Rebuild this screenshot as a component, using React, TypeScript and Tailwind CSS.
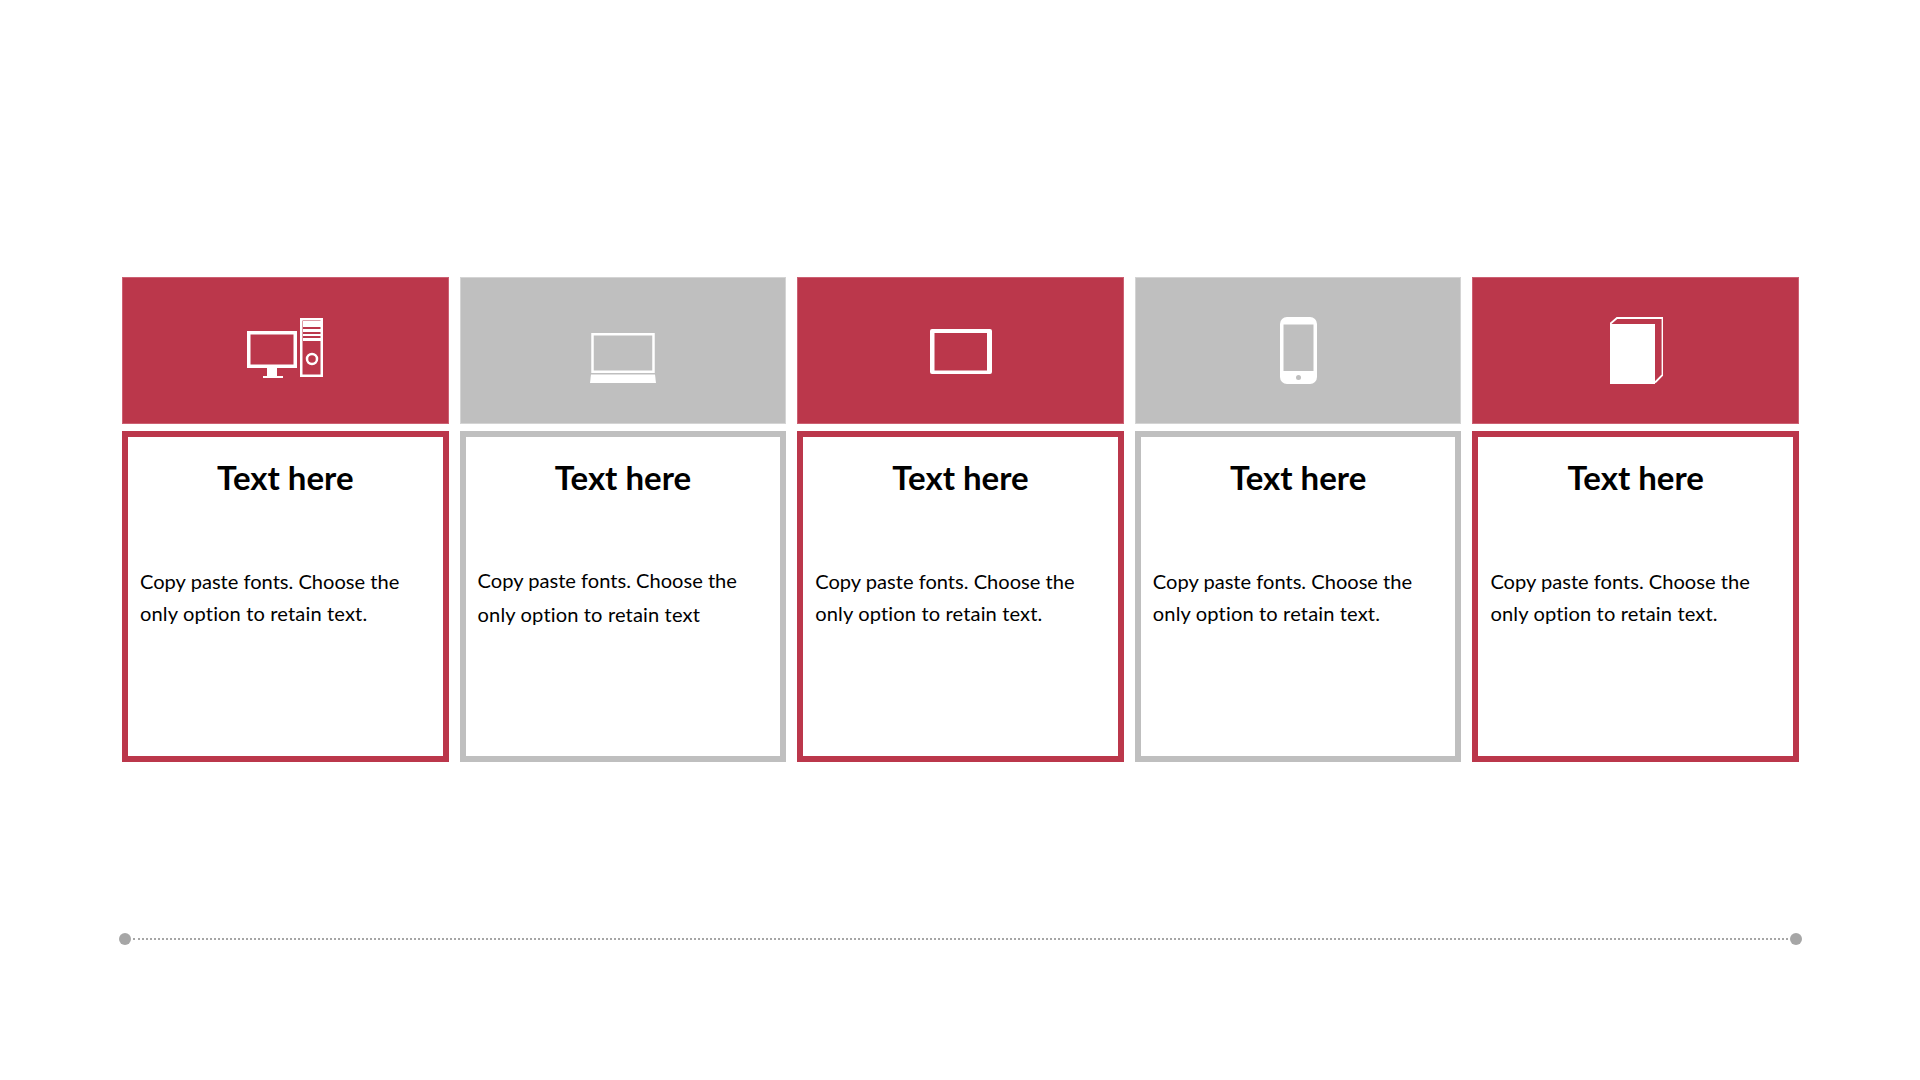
function DesktopIcon() {
  return (
    <svg width="76" height="60" viewBox="0 0 76 60" className="-mt-[5px] block" fill="none">
      <rect x="1.75" y="14.75" width="46.500" height="33.500" stroke="white" strokeWidth="3.500" />
      <path d="M20 50h10v8H20z" fill="white" />
      <path d="M16 58h20v2H16z" fill="white" />
      <rect x="54.250" y="1.250" width="20.500" height="56.500" stroke="white" strokeWidth="2.500" />
      <path d="M56 3h18v6H56zM56 11h18v3H56zM56 16h18v2H56zM56 20h18v3H56z" fill="white" />
      <circle cx="65" cy="41" r="5" stroke="white" strokeWidth="2.500" />
    </svg>
  );
}

function LaptopIcon() {
  return (
    <svg width="66" height="50" viewBox="0 0 66 50" className="mt-[14px] block" fill="none">
      <rect x="2.500" y="1.250" width="61" height="37.500" stroke="white" strokeWidth="2.500" />
      <path d="M1 41.500h64l1 8.500H0z" fill="white" />
    </svg>
  );
}

function TabletIcon() {
  return (
    <svg width="62" height="45" viewBox="0 0 62 45" className="mt-[2px] ml-[2px] block">
      <path
        fillRule="evenodd"
        d="M2 0h58a2 2 0 0 1 2 2v41a2 2 0 0 1-2 2H2a2 2 0 0 1-2-2V2a2 2 0 0 1 2-2zM4.500 4v37.500h52.500V4z"
        fill="white"
      />
    </svg>
  );
}

function PhoneIcon() {
  return (
    <svg width="37" height="67" viewBox="0 0 37 67" className="block">
      <path
        fillRule="evenodd"
        d="M7 0h23a7 7 0 0 1 7 7v53a7 7 0 0 1-7 7H7a7 7 0 0 1-7-7V7a7 7 0 0 1 7-7zM3.500 7.500v46.500h30V7.500z"
        fill="white"
      />
      <circle cx="18.500" cy="60.500" r="2.500" fill="#bfbfbf" />
    </svg>
  );
}

function BookIcon() {
  return (
    <svg width="53" height="67" viewBox="0 0 53 67" className="ml-[1px] block" fill="none">
      <path d="M0 7h45v60H0z" fill="white" />
      <path d="M0 7l7-6h45.500V58L45 65.500" stroke="white" strokeWidth="1.800" />
    </svg>
  );
}

const cards = [
  { icon: <DesktopIcon />, red: true, text: "only option to retain text.", para: "mt-[68px] leading-[32px]" },
  { icon: <LaptopIcon />, red: false, text: "only option to retain text", para: "mt-[66px] leading-[34px]" },
  { icon: <TabletIcon />, red: true, text: "only option to retain text.", para: "mt-[68px] leading-[32px]" },
  { icon: <PhoneIcon />, red: false, text: "only option to retain text.", para: "mt-[68px] leading-[32px]" },
  { icon: <BookIcon />, red: true, text: "only option to retain text.", para: "mt-[68px] leading-[32px]" },
];

export default function App() {
  return (
    <div className="min-h-[1080px] bg-white font-['Lato',sans-serif] text-black overflow-hidden">
      <div className="pt-[277px] pl-[122px] pr-[121px]">
        <div className="grid grid-cols-5 gap-[11px]">
          {cards.map((card, i) => (
            <div key={i}>
              <div
                className={`h-[147px] flex items-center justify-center border ${
                  card.red ? "bg-[#bb374b] border-[#cc6072]" : "bg-[#bfbfbf] border-[#d4d4d4]"
                }`}
              >
                {card.icon}
              </div>
              <div
                className={`mt-[7px] h-[331px] border-[6px] px-[12px] ${
                  card.red ? "border-[#bb374b]" : "border-[#bfbfbf]"
                }`}
              >
                <h2 className="pt-[20px] text-center text-[33px] leading-[40px] font-bold">Text here</h2>
                <p className={`text-[20.100px] ${card.para}`}>
                  Copy paste fonts. Choose the
                  <br />
                  <span className="tracking-[0.13px]">{card.text}</span>
                </p>
              </div>
            </div>
          ))}
        </div>
      </div>
      <div className="mt-[171px] ml-[119px] w-[1683px] flex items-center gap-[2px]">
        <div className="w-[12px] h-[12px] rounded-full bg-[#a6a6a6]" />
        <div className="flex-1 border-t-2 border-dotted border-[#a6a6a6]" />
        <div className="w-[12px] h-[12px] rounded-full bg-[#a6a6a6]" />
      </div>
    </div>
  );
}
